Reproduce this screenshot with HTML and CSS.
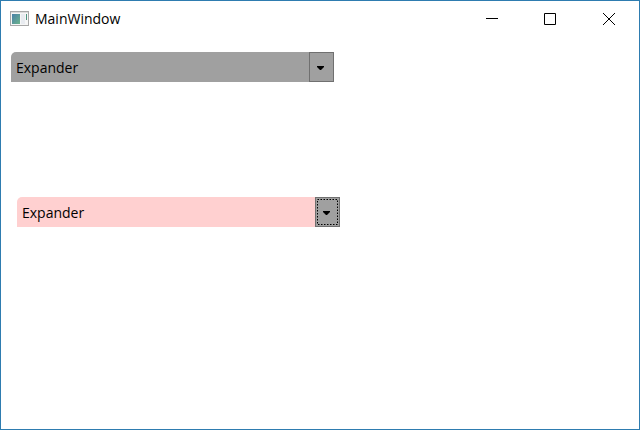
FILE: index.html
```html
<!DOCTYPE html>
<html lang="en">
<head>
    <meta charset="UTF-8">
    <meta name="viewport" content="width=device-width, initial-scale=1.0">
    <title>MainWindow</title>
    <link rel="stylesheet" href="styles.css">
</head>
<body>
    <div class="window">
        <header class="titlebar">
            <svg class="app-icon" width="20" height="16" viewBox="0 0 20 16" aria-hidden="true">
                <defs>
                    <linearGradient id="pane" x1="0" y1="0" x2="1" y2="1">
                        <stop offset="0" stop-color="#4a80a8"/>
                        <stop offset="1" stop-color="#6cb48c"/>
                    </linearGradient>
                </defs>
                <rect x="0.5" y="0.5" width="18" height="14" fill="#f6f6f6" stroke="#a8a8a8"/>
                <rect x="1" y="1" width="17" height="1" fill="#dcdcdc"/>
                <rect x="2" y="3" width="8" height="10" fill="url(#pane)"/>
                <rect x="11" y="3" width="4" height="10" fill="#e8ebf0"/>
                <rect x="16" y="3" width="1" height="6" fill="#4f9480"/>
            </svg>
            <h1 class="title">MainWindow</h1>
            <div class="caption-buttons">
                <button type="button" class="caption-button" aria-label="Minimize">
                    <svg width="13" height="13" viewBox="0 0 13 13">
                        <path d="M1 5.5H13"/>
                    </svg>
                </button>
                <button type="button" class="caption-button" aria-label="Maximize">
                    <svg width="13" height="13" viewBox="0 0 13 13">
                        <path d="M0.5 0.5H11.5V11.5H0.5Z"/>
                    </svg>
                </button>
                <button type="button" class="caption-button" aria-label="Close">
                    <svg width="13" height="13" viewBox="0 0 13 13">
                        <path d="M0 0L12 12M12 0L0 12"/>
                    </svg>
                </button>
            </div>
        </header>

        <main class="content">
            <section class="expander">
                <h2 class="expander-title">Expander</h2>
                <button type="button" class="expander-toggle" aria-label="Expand">
                    <svg width="9" height="4" viewBox="0 0 9 4">
                        <path d="M0 0H7V1L4 4H3L0 1Z"/>
                    </svg>
                </button>
            </section>

            <section class="expander expander-pink">
                <h2 class="expander-title">Expander</h2>
                <button type="button" class="expander-toggle" aria-label="Expand">
                    <svg width="9" height="4" viewBox="0 0 9 4">
                        <path d="M0 0H7V1L4 4H3L0 1Z"/>
                    </svg>
                    <svg class="focus-ring" width="21" height="26" viewBox="0 0 21 26">
                        <rect x="0.5" y="0.5" width="20" height="25"/>
                    </svg>
                </button>
            </section>
        </main>
    </div>
</body>
</html>
```

FILE: styles.css
```css
* {
    box-sizing: border-box;
}

body {
    margin: 0;
    font-family: "Open Sans", "Noto Sans", sans-serif;
    font-size: 14px;
    color: #000;
    background-color: #fff;
}

.window {
    min-height: 100vh;
    border: 1px solid #2e7cb0;
}

.titlebar {
    display: flex;
    align-items: center;
    height: 36px;
    padding-left: 9px;
}

.title,
.expander-title {
    margin: 0;
    font-size: 14px;
    font-weight: normal;
    line-height: 20px;
}

.title {
    margin-left: 5px;
}

.caption-buttons {
    display: flex;
    margin-left: auto;
}

.caption-button {
    display: flex;
    align-items: center;
    justify-content: center;
    width: 59px;
    height: 34px;
    padding: 0;
    border: none;
    background: none;
}

.caption-button path {
    fill: none;
    stroke: #000;
}

.content {
    display: flex;
    flex-direction: column;
    gap: 115px;
    padding: 15px 10px;
}

.expander {
    display: flex;
    width: 323px;
    max-width: 100%;
    height: 30px;
    background-color: #a0a0a0;
    border-radius: 5px 0 0 0;
}

.expander-pink {
    margin-left: 6px;
    background-color: #ffd0d0;
}

.expander-title {
    flex: 1;
    padding: 6px 5px;
}

.expander-toggle {
    position: relative;
    display: flex;
    align-items: center;
    justify-content: center;
    width: 25px;
    padding: 1px 0 0;
    border: 1px solid #707070;
    border-radius: 0;
    background-color: #a0a0a0;
}

.focus-ring {
    position: absolute;
    top: 1px;
    left: 1px;
}

.focus-ring rect {
    fill: none;
    stroke: #000;
    stroke-dasharray: 1.5 1.5;
}
```
